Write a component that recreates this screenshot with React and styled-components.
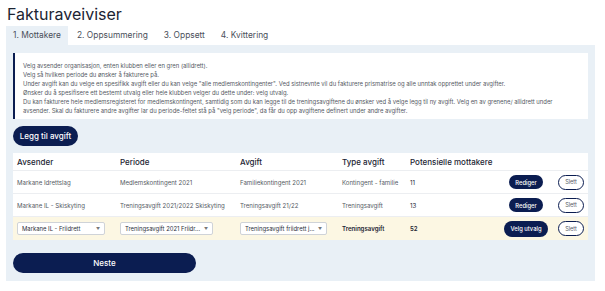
import React from 'react';
import styled, { createGlobalStyle } from 'styled-components';

const GlobalStyle = createGlobalStyle`
  body {
    margin: 0;
    background: #fff;
    font-family: Inter, "Noto Sans", sans-serif;
    color: #2b2f3a;
  }
`;

const navy = '#0b1d51';

const Page = styled.div`
  width: 605px;
  height: 291px;
  padding: 3px 10px 0 6px;
  box-sizing: border-box;
`;

const Title = styled.h1`
  margin: 0 0 0 1px;
  font-size: 16px;
  font-weight: 400;
  color: #1c2433;
  height: 23px;
  line-height: 22px;
`;

const Tabs = styled.div`
  display: flex;
  height: 19px;
`;

const Tab = styled.div`
  padding: 0 7px;
  font-size: 8.4px;
  line-height: 19px;
  color: #4a4f5a;
  background: ${({ active }) => (active ? '#e9f0f6' : 'transparent')};
  margin-right: 2px;
`;

const Panel = styled.div`
  background: #e9f0f6;
  padding: 8px 7px 8px 6px;
  display: flex;
  flex-direction: column;
`;

const Info = styled.div`
  background: #fff;
  border-left: 2px solid ${navy};
  margin-left: 1px;
  padding: 8px 8px 0 8px;
  font-size: 5.9px;
  line-height: 9px;
  color: #555a64;
  height: 66px;
  box-sizing: border-box;
`;

const Line = styled.div``;

const PillButton = styled.button`
  font-family: Inter, "Noto Sans", sans-serif;
  background: ${navy};
  color: #fff;
  border: none;
  border-radius: 12px;
  font-weight: 500;
  cursor: pointer;
  padding: 0;
  font-size: ${({ size }) => size || '7px'};
  width: ${({ w }) => w};
  height: ${({ h }) => h};
`;

const AddRow = styled.div`
  display: flex;
  margin: 7px 0 7px 1px;
`;

const Table = styled.div`
  background: #fff;
  margin-left: 1px;
`;

const Row = styled.div`
  display: grid;
  grid-template-columns: 103px 120px 102px 68px 94px 54px 1fr;
  align-items: center;
  height: ${({ h }) => h || '23px'};
  padding-left: 4px;
  background: ${({ highlight }) => (highlight ? '#fcf7e3' : '#fff')};
  border-bottom: ${({ last }) => (last ? 'none' : '1px solid #eceef1')};
  box-sizing: border-box;
`;

const Head = styled.div`
  font-size: 8px;
  font-weight: 500;
  color: #1c2433;
`;

const Cell = styled.div`
  font-size: 6.1px;
  color: ${({ dark }) => (dark ? '#1c2433' : '#555a64')};
  font-weight: ${({ bold }) => (bold ? 600 : 400)};
  white-space: nowrap;
`;

const ActionCell = styled.div`
  width: ${({ w }) => w || 'auto'};
  display: flex;
  align-items: center;
  justify-content: ${({ w }) => (w ? 'center' : 'flex-start')};
`;

const Select = styled.div`
  display: flex;
  align-items: center;
  justify-content: space-between;
  box-sizing: border-box;
  width: ${({ w }) => w};
  height: 13px;
  border: 1px solid #cfd3d8;
  border-radius: 2px;
  background: #fff;
  padding: 0 4px;
  font-size: 5.9px;
  color: #2b2f3a;
  white-space: nowrap;
`;

const Caret = styled.span`
  font-size: 4px;
  color: #777;
`;

const Outline = styled.button`
  font-family: Inter, "Noto Sans", sans-serif;
  width: 26px;
  height: 15px;
  border: 1px solid ${navy};
  border-radius: 8px;
  background: #fff;
  color: #555a64;
  font-size: 5.6px;
  padding: 0;
`;

const NextRow = styled.div`
  display: flex;
  margin: 13px 0 0 1px;
`;

const rows = [
  ['Markane Idrettslag', 'Medlemskontingent 2021', 'Familiekontingent 2021', 'Kontingent - familie', '11'],
  ['Markane IL - Skiskyting', 'Treningsavgift 2021/2022 Skiskyting', 'Treningsavgift 21/22', 'Treningsavgift', '13'],
];

export default function App() {
  return (
    <>
      <GlobalStyle />
      <Page>
        <Title>Fakturaveiviser</Title>
        <Tabs>
          <Tab active>1. Mottakere</Tab>
          <Tab>2. Oppsummering</Tab>
          <Tab>3. Oppsett</Tab>
          <Tab>4. Kvittering</Tab>
        </Tabs>
        <Panel>
          <Info>
            <Line>Velg avsender organisasjon, enten klubben eller en gren (allidrett).</Line>
            <Line>Velg så hvilken periode du ønsker å fakturere på.</Line>
            <Line>Under avgift kan du velge en spesifikk avgift eller du kan velge "alle medlemskontingenter". Ved sistnevnte vil du fakturere prismatrise og alle unntak opprettet under avgifter.</Line>
            <Line>Ønsker du å spesifisere ett bestemt utvalg eller hele klubben velger du dette under: velg utvalg.</Line>
            <Line>Du kan fakturere hele medlemsregisteret for medlemskontingent, samtidig som du kan legge til de treningsavgiftene du ønsker ved å velge legg til ny avgift. Velg en av grenene/ allidrett under avsender. Skal du fakturere andre avgifter lar du periode-feltet stå på "velg periode", da får du opp avgiftene definert under andre avgifter.</Line>
          </Info>
          <AddRow>
            <PillButton w="65px" h="20px" size="8px">Legg til avgift</PillButton>
          </AddRow>
          <Table>
            <Row h="18px">
              <Head>Avsender</Head>
              <Head>Periode</Head>
              <Head>Avgift</Head>
              <Head>Type avgift</Head>
              <Head>Potensielle mottakere</Head>
              <span />
              <span />
            </Row>
            {rows.map((r, i) => (
              <Row key={i}>
                <Cell>{r[0]}</Cell>
                <Cell>{r[1]}</Cell>
                <Cell>{r[2]}</Cell>
                <Cell>{r[3]}</Cell>
                <Cell dark>{r[4]}</Cell>
                <ActionCell w="44px"><PillButton w="34px" h="14px" size="5.8px">Rediger</PillButton></ActionCell>
                <ActionCell><Outline>Slett</Outline></ActionCell>
              </Row>
            ))}
            <Row highlight last>
              <ActionCell><Select w="88px">Markane IL - Friidrett <Caret>▼</Caret></Select></ActionCell>
              <ActionCell><Select w="93px">Treningsavgift 2021 Friidr... <Caret>▼</Caret></Select></ActionCell>
              <ActionCell><Select w="87px">Treningsavgift friidrett j... <Caret>▼</Caret></Select></ActionCell>
              <Cell dark bold>Treningsavgift</Cell>
              <Cell dark bold>52</Cell>
              <ActionCell w="44px"><PillButton w="44px" h="16px" size="5.8px">Velg utvalg</PillButton></ActionCell>
              <ActionCell><Outline>Slett</Outline></ActionCell>
            </Row>
          </Table>
          <NextRow>
            <PillButton w="183px" h="20px" size="8px">Neste</PillButton>
          </NextRow>
        </Panel>
      </Page>
    </>
  );
}
